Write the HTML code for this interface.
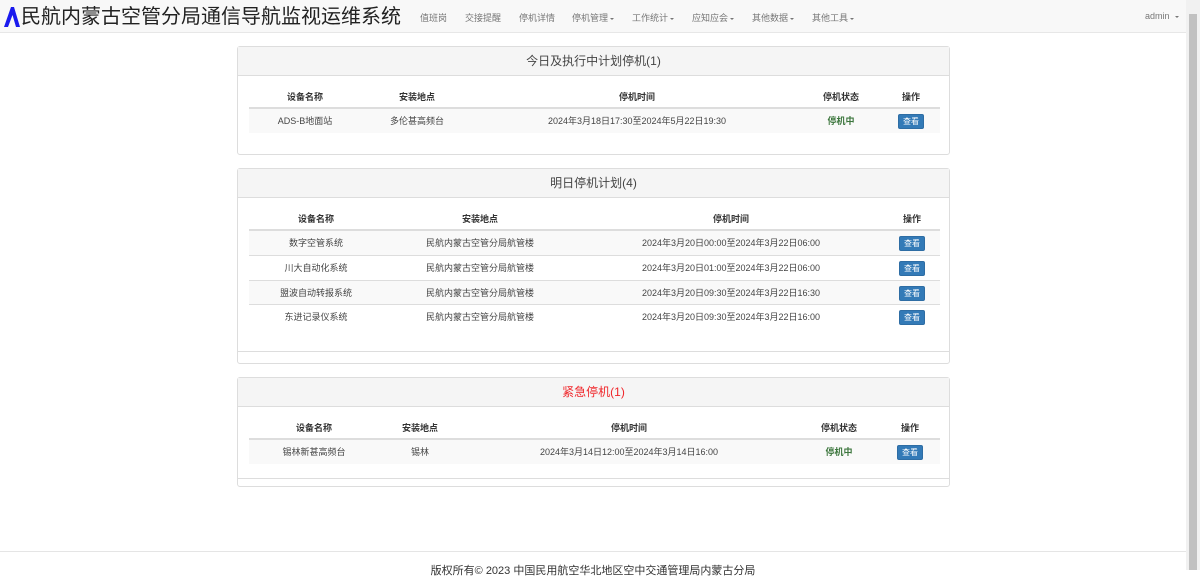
<!DOCTYPE html>
<html><head><meta charset="utf-8"><style>
*{box-sizing:border-box;margin:0;padding:0}
body{width:1200px;height:570px;overflow:hidden;background:#fff;font-family:"Liberation Sans","Noto Sans CJK SC",sans-serif;color:#333;position:relative}
.nav{position:absolute;left:0;top:0;width:1186px;height:33px;background:#f8f8f8;border-bottom:1px solid #e7e7e7}
.brand{position:absolute;left:3px;top:4px;font-size:20px;color:#222;line-height:26px;display:flex;align-items:center}
.nav a{position:absolute;top:11px;font-size:9px;color:#777;text-decoration:none}
.car{display:inline-block;border-left:2px solid transparent;border-right:2px solid transparent;border-top:2px solid #777;vertical-align:middle;margin-left:2px}
.sb{position:absolute;right:0;top:0;width:14px;height:570px;background:#f1f1f1}
.sb i{position:absolute;left:3px;top:14px;width:8px;height:556px;background:#c1c1c1}
.panel{position:absolute;left:237px;width:713px;border:1px solid #ddd;border-radius:3px;background:#fff}
.ph{height:29px;background:#f5f5f5;border-bottom:1px solid #ddd;text-align:center;font-size:12px;line-height:29px;color:#444}
.row{position:absolute;left:11px;width:691px;height:24px;font-size:9px;line-height:24px;color:#444}
.row span{position:absolute;transform:translateX(-50%);white-space:nowrap}
.hd{font-weight:bold;border-bottom:2px solid #ddd;height:22px;line-height:20px;color:#333}
.st{background:#f9f9f9}
.bd{border-top:1px solid #ddd}
.g{color:#3c763d;font-weight:bold}
.btn{background:#337ab7;color:#fff;border:1px solid #2e6da4;border-radius:2px;font-size:8px;line-height:11px;padding:1px 4px;top:5px}
.inner{position:absolute;left:-1px;right:-1px;border-top:1px solid #ddd}
.foot{position:absolute;left:0;top:551px;width:1186px;border-top:1px solid #e5e5e5;text-align:center;font-size:11px;padding-top:10px;color:#333}
</style></head><body>
<div class="nav">
<div class="brand"><svg width="18" height="22" viewBox="0 0 18 22"><path d="M1 21 L8 1 L11 1 L17 21 L13 21 L9.5 9 L5 21 Z" fill="#1a1aee"/></svg><span>民航内蒙古空管分局通信导航监视运维系统</span></div>
<a style="left:420px">值班岗</a>
<a style="left:465px">交接提醒</a>
<a style="left:519px">停机详情</a>
<a style="left:572px">停机管理<i class="car"></i></a>
<a style="left:632px">工作统计<i class="car"></i></a>
<a style="left:692px">应知应会<i class="car"></i></a>
<a style="left:752px">其他数据<i class="car"></i></a>
<a style="left:812px">其他工具<i class="car"></i></a>
<a style="left:1145px">admin<i class="car" style="margin-left:5px"></i></a>
</div>
<div class="sb"><i></i></div>

<div class="panel" style="top:46px;height:109px">
<div class="ph">今日及执行中计划停机(1)</div>
<div class="row hd" style="top:40px"><span style="left:56px">设备名称</span><span style="left:168px">安装地点</span><span style="left:388px">停机时间</span><span style="left:592px">停机状态</span><span style="left:662px">操作</span></div>
<div class="row st" style="top:62px"><span style="left:56px">ADS-B地面站</span><span style="left:168px">多伦甚高频台</span><span style="left:388px">2024年3月18日17:30至2024年5月22日19:30</span><span class="g" style="left:592px">停机中</span><span class="btn" style="left:662px">查看</span></div>
</div>

<div class="panel" style="top:168px;height:196px">
<div class="ph">明日停机计划(4)</div>
<div class="inner" style="top:182px"></div>
<div class="row hd" style="top:40px"><span style="left:67px">设备名称</span><span style="left:231px">安装地点</span><span style="left:482px">停机时间</span><span style="left:663px">操作</span></div>
<div class="row st" style="top:62px"><span style="left:67px">数字空管系统</span><span style="left:231px">民航内蒙古空管分局航管楼</span><span style="left:482px">2024年3月20日00:00至2024年3月22日06:00</span><span class="btn" style="left:663px">查看</span></div>
<div class="row bd" style="top:86px"><span style="left:67px">川大自动化系统</span><span style="left:231px">民航内蒙古空管分局航管楼</span><span style="left:482px">2024年3月20日01:00至2024年3月22日06:00</span><span class="btn" style="left:663px">查看</span></div>
<div class="row st bd" style="top:111px"><span style="left:67px">盟波自动转报系统</span><span style="left:231px">民航内蒙古空管分局航管楼</span><span style="left:482px">2024年3月20日09:30至2024年3月22日16:30</span><span class="btn" style="left:663px">查看</span></div>
<div class="row bd" style="top:135px"><span style="left:67px">东进记录仪系统</span><span style="left:231px">民航内蒙古空管分局航管楼</span><span style="left:482px">2024年3月20日09:30至2024年3月22日16:00</span><span class="btn" style="left:663px">查看</span></div>
</div>

<div class="panel" style="top:377px;height:110px">
<div class="ph" style="color:#f0262a">紧急停机(1)</div>
<div class="inner" style="top:100px"></div>
<div class="row hd" style="top:40px"><span style="left:65px">设备名称</span><span style="left:171px">安装地点</span><span style="left:380px">停机时间</span><span style="left:590px">停机状态</span><span style="left:661px">操作</span></div>
<div class="row st" style="top:62px"><span style="left:65px">锡林新甚高频台</span><span style="left:171px">锡林</span><span style="left:380px">2024年3月14日12:00至2024年3月14日16:00</span><span class="g" style="left:590px">停机中</span><span class="btn" style="left:661px">查看</span></div>
</div>

<div class="foot">版权所有© 2023 中国民用航空华北地区空中交通管理局内蒙古分局</div>
</body></html>
